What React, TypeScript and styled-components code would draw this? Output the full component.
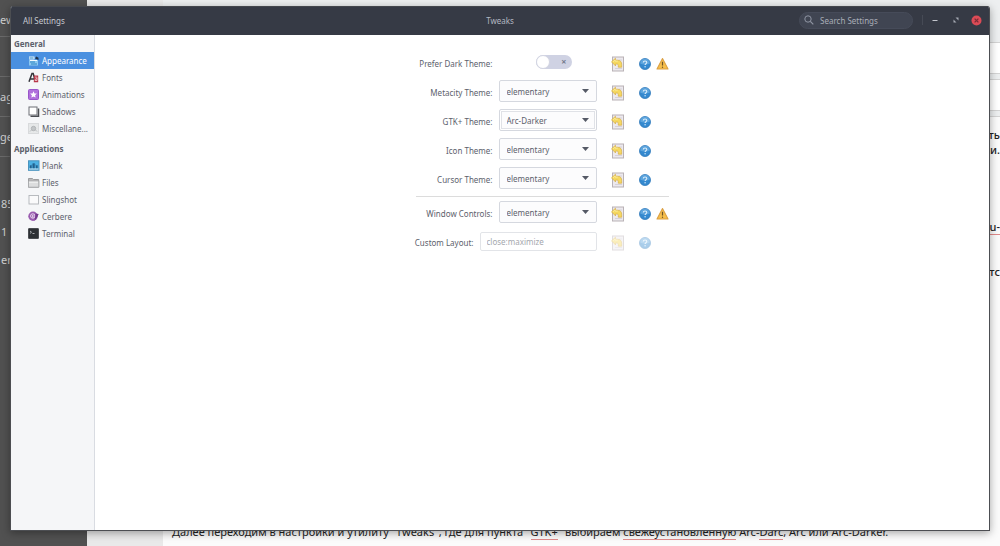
import React from "react";
import styled, { createGlobalStyle } from "styled-components";

const GlobalStyle = createGlobalStyle`
  *, *::before, *::after { box-sizing: border-box; }
  body {
    margin: 0;
    overflow: hidden;
    font-family: "Noto Sans", "Open Sans", sans-serif;
    font-size: 8px;
    color: #5c616c;
  }
  button, input, select { font: inherit; color: inherit; margin: 0; }
`;

/* ---------- page behind the window ---------- */

const Desktop = styled.div`
  position: relative;
  display: grid;
  grid-template-columns: 87px 76px 1fr;
  min-height: 100vh;
  background: #edeff0;
`;

const DarkNav = styled.aside`
  display: flex;
  flex-direction: column;
  background: #515151;
  color: #d0d0d0;
  font-size: 11px;
`;

const NavRow = styled.div<{ $plain?: boolean }>`
  display: flex;
  align-items: center;
  height: ${(p) => (p.$plain ? 28 : 39)}px;
  padding-left: ${(p) => (p.$plain ? 1 : 0)}px;
  white-space: nowrap;
`;

const NavBlock = styled.div`
  border-bottom: 1px solid #6a6a6a;
  &:first-child { height: 37px; }
`;

const NavList = styled.div`
  padding-top: 32px;
`;

const Gutter = styled.div`
  background: #e9e9e9;
`;

const Editor = styled.main`
  display: flex;
  flex-direction: column;
  padding-top: 42px;
  color: #222;
  font-size: 11px;
  line-height: 15px;
`;

const Panel = styled.div`
  height: 32px;
  margin-bottom: 5px;
  background: #fff;
  border: 1px solid #d4d4d4;
  border-width: 1px 0;
`;

const Sheet = styled.article`
  flex: 1;
  display: flex;
  flex-direction: column;
  background: #fbfbfb;
  border-top: 1px solid #d4d4d4;
  padding: 10px 0 7px 9px;
`;

const LineEnd = styled.p<{ $gap?: number }>`
  margin: ${(p) => p.$gap ?? 0}px 0 0;
  text-align: right;
  font-weight: 500;
`;

const LastLine = styled.p`
  margin: auto 0 0;
  white-space: nowrap;
`;

const Misspelt = styled.span`
  border-bottom: 1px solid #e08a8a;
`;

/* ---------- window ---------- */

const Window = styled.section`
  position: absolute;
  inset: 6px 10px 15px;
  display: flex;
  flex-direction: column;
  background: #fff;
  border: 1px solid #4c4e52;
  border-top: 0;
  border-radius: 3px 3px 0 0;
  overflow: hidden;
  box-shadow: 0 2px 8px rgba(0, 0, 0, 0.35);
`;

const TitleBar = styled.header`
  display: grid;
  grid-template-columns: 1fr auto 1fr;
  align-items: center;
  height: 29px;
  padding: 0 2px 2px;
  background: #363a45;
  border-top: 1px solid #44474d;
  color: #b4b8c1;
`;

const BackButton = styled.button`
  justify-self: start;
  padding: 0 10px;
  border: 0;
  background: none;
  color: #c6c9d0;
`;

const Title = styled.h1`
  margin: 0;
  font-size: 8px;
  font-weight: 400;
`;

const TitleEnd = styled.div`
  display: flex;
  justify-content: flex-end;
  align-items: center;
`;

const Search = styled.label`
  display: flex;
  align-items: center;
  gap: 6px;
  width: 114px;
  height: 17px;
  padding: 0 4px;
  border-radius: 9px;
  background: #404552;
  border: 1px solid #464b59;
  color: #8f95a3;
`;

const SearchInput = styled.input`
  flex: 1;
  min-width: 0;
  padding: 0;
  border: 0;
  outline: 0;
  background: none;
  &::placeholder { color: #a9adb7; opacity: 1; }
`;

const BarDivider = styled.span`
  width: 1px;
  height: 10px;
  margin: 0 1px 0 9px;
  background: #464a55;
`;

const WindowButton = styled.button`
  display: grid;
  place-items: center;
  width: 21px;
  height: 16px;
  padding: 0;
  border: 0;
  background: none;
`;

const Body = styled.div`
  flex: 1;
  display: flex;
  min-height: 0;
`;

const SideBar = styled.nav`
  display: flex;
  flex-direction: column;
  gap: 3px;
  width: 84px;
  background: #f5f6f8;
  border-right: 1px solid #d9dce2;
`;

const GroupTitle = styled.h2`
  margin: 0;
  padding-left: 3px;
  font-size: 8px;
  font-weight: 700;
  line-height: 17px;
`;

const ItemList = styled.ul`
  margin: 0;
  padding: 0;
  list-style: none;
`;

const Item = styled.a<{ $active?: boolean }>`
  display: flex;
  align-items: center;
  gap: 2px;
  height: 17px;
  padding-left: 17px;
  color: ${(p) => (p.$active ? "#fff" : "inherit")};
  background: ${(p) => (p.$active ? "#4a90e0" : "none")};
  text-decoration: none;
  white-space: nowrap;
`;

const Content = styled.div`
  flex: 1;
  display: flex;
  justify-content: center;
  padding-top: 16px;
`;

const Form = styled.form`
  display: flex;
  flex-direction: column;
  gap: 11px;
  width: 253px;
`;

const RowGroup = styled.div<{ $divided?: boolean }>`
  display: flex;
  flex-direction: column;
  gap: 7px;
  padding-top: ${(p) => (p.$divided ? 4 : 0)}px;
  margin-top: ${(p) => (p.$divided ? -4 : 0)}px;
  border-top: ${(p) => (p.$divided ? "1px solid #dcdcdc" : "0")};
`;

const Row = styled.div`
  display: flex;
  align-items: center;
  height: 22px;
`;

const Field = styled.div`
  flex: none;
  display: flex;
  justify-content: flex-end;
  align-items: center;
  gap: 6px;
  width: 181px;
`;

const Label = styled.label`
  padding-top: 3px;
  white-space: nowrap;
`;

const SelectShell = styled.span`
  position: relative;
  width: 98px;
  height: 22px;
`;

const Select = styled.select<{ $focused?: boolean }>`
  appearance: none;
  display: block;
  width: 100%;
  height: 100%;
  padding: 0 16px 0 7px;
  border: 1px solid #d5d8df;
  border-radius: 2px;
  outline: 0;
  background: #fcfcfd;
  box-shadow: ${(p) => (p.$focused ? "inset 0 0 0 1px #fff, inset 0 0 0 2px #e0e2e7" : "none")};
`;

const Caret = styled.svg`
  position: absolute;
  top: 9px;
  right: 8px;
  pointer-events: none;
`;

const SwitchSlot = styled.span`
  display: flex;
  width: 98px;
  padding-left: 37px;
`;

const Switch = styled.input`
  appearance: none;
  display: flex;
  align-items: center;
  justify-content: space-between;
  width: 36px;
  height: 14px;
  padding-right: 5px;
  border-radius: 7px;
  background: #cfd2e3;
  &::before {
    content: "";
    width: 14px;
    height: 14px;
    border: 1px solid #d3d5e2;
    border-radius: 50%;
    background: #fff;
  }
  &::after {
    content: "×";
    font-size: 9px;
    font-weight: 700;
    line-height: 12px;
    color: #757b8c;
  }
`;

const TextField = styled.input`
  width: 117px;
  height: 19px;
  padding: 0 6px;
  border: 1px solid #e2e4e8;
  border-radius: 2px;
  background: #fff;
  &:disabled { color: #a4a7ad; }
`;

const Actions = styled.div`
  display: flex;
  align-items: center;
  padding-top: 3px;
  margin-left: 14px;
`;

const IconButton = styled.button<{ $last?: boolean }>`
  display: block;
  width: 14px;
  height: 16px;
  margin-right: ${(p) => (p.$last ? 4 : 13)}px;
  padding: 0;
  border: 0;
  background: none;
  &:disabled { opacity: 0.42; }
  svg { display: block; }
`;

const ResetIcon = () => (
  <svg width="14" height="16" viewBox="0 0 14 16">
    <rect x="1.500" y="1" width="11" height="14" fill="#ece9ee" stroke="#b9b2b6" />
    <path d="M4 12.500h7M8 4h3" stroke="#d6d1d8" />
    <path
      d="M.5 5.800 4.500 2.200v2h2.200c2.700 0 4 1.700 4 4.200v2.800H7.300V9.600c0-1-.5-1.500-1.400-1.500H4.500v1.800z"
      fill="#f5d860"
      stroke="#d6ad45"
      strokeWidth=".7"
      strokeLinejoin="round"
    />
    <path d="M2 5.800 4.200 4v1.200h2.500" fill="none" stroke="#fcee9f" strokeWidth=".8" />
  </svg>
);

const HelpIcon = () => (
  <svg width="14" height="16" viewBox="0 0 14 16">
    <circle cx="7" cy="8" r="5.500" fill="#3489cf" stroke="#2f78ba" strokeWidth=".8" />
    <path d="M2.200 7.500a4.800 4.800 0 0 1 9.600 0c-2.500 1.300-7 1.300-9.600 0z" fill="#78b6e6" opacity=".6" />
    <path d="M5.300 6.600c0-2.200 3.500-2.200 3.500 0 0 1.200-1.700 1.200-1.700 2.400" fill="none" stroke="#d9ecfa" strokeWidth="1.100" />
    <circle cx="7.100" cy="10.800" r=".7" fill="#d9ecfa" />
  </svg>
);

const WarningIcon = () => (
  <svg width="13" height="14" viewBox="0 0 13 14" role="img" aria-label="Warning">
    <path d="M6.500 1.500 12 12H1z" fill="#f6bf4c" stroke="#dba045" strokeWidth="1.100" strokeLinejoin="round" />
    <path d="M6.500 4.800v3.800" stroke="#6e5429" strokeWidth="1.200" />
    <circle cx="6.500" cy="10.300" r=".7" fill="#6e5429" />
  </svg>
);

const icons: Record<string, React.ReactNode> = {
  Appearance: (
    <>
      <path d="M1 1.500h5.500v3H1z" fill="#dff1fb" />
      <path d="M1 5h9v5.500H1z" fill="#8cc8f0" />
      <path d="M1.500 3h4M2 7h5M3 9h6" stroke="#2f86c4" />
      <path d="M7 3.500 8.200 1.500l2.300 1.200V5z" fill="#22344a" />
      <path d="M2 5.500h7" stroke="#f4fbff" />
    </>
  ),
  Fonts: (
    <>
      <path d="M1 9.800 4 1.500h1.200L7.500 9.800M2.300 7H6" fill="none" stroke="#35363c" strokeWidth="1.500" />
      <path d="M6 3.500h4.200v6.700H5.800z" fill="#b73648" />
      <path d="M7 8.500c0-2 2-2 2-2v2zm0-3.300c2-.5 2 0 2 1.300" fill="none" stroke="#f3d3d7" strokeWidth=".8" />
    </>
  ),
  Animations: (
    <>
      <rect x=".5" y=".5" width="10" height="10" rx="1" fill="#b070dc" stroke="#9855c9" />
      <path d="m5.500 2.200 1 2.200 2.400.2-1.800 1.600.5 2.400-2.100-1.200-2.100 1.200.5-2.400-1.800-1.600 2.400-.2z" fill="#fff" />
    </>
  ),
  Shadows: (
    <>
      <path d="M2.500 10.200h8V2.500" fill="none" stroke="#4b4d52" strokeWidth="1.500" />
      <rect x="1" y="1" width="8" height="8" fill="#fff" stroke="#6c6e74" />
    </>
  ),
  "Miscellane...": (
    <>
      <rect x=".5" y=".5" width="10" height="10" fill="#e6e8e9" stroke="#d8dadc" />
      <circle cx="5.500" cy="5.500" r="2.200" fill="#c3c6c8" stroke="#b2b5b8" />
      <path d="M2 8.500 3.500 7M9 8.500 7.500 7" stroke="#b9bcbf" />
    </>
  ),
  Plank: (
    <>
      <rect x=".5" y=".8" width="10.500" height="9.500" fill="#4db2e4" stroke="#4a93bd" />
      <path d="M1 9h9.500" stroke="#d5e0e6" strokeWidth="1.200" />
      <path d="M2 8h1.500V5.500H2zM4.800 8h1.800V3.500H4.800zM8 8h1.500V5.500H8zM3.500 5h4.500" fill="#205c86" stroke="#2a6f9c" strokeWidth=".5" />
    </>
  ),
  Files: (
    <>
      <path d="M.5 1.500h4l1 1h5.200v7.700H.5z" fill="#b9babb" stroke="#9b9c9e" />
      <path d="M.5 4h10.300v6.200H.5z" fill="#dcddde" stroke="#a6a7a9" strokeWidth=".8" />
      <path d="M1 5.200h9" stroke="#f4f4f4" />
    </>
  ),
  Slingshot: <rect x="1" y="1.500" width="9.500" height="8.500" fill="#fafafb" stroke="#b1b4b9" strokeWidth=".9" />,
  Cerbere: (
    <>
      <circle cx="5" cy="5.200" r="4.700" fill="#9a5cb0" />
      <circle cx="4.800" cy="5" r="2.200" fill="none" stroke="#ead8f0" />
      <path d="M7.500 2.500 10.700 3 9 6.500 6.500 10 7 7z" fill="#74398d" />
      <path d="M4.800 4v2.500" stroke="#f7effa" />
    </>
  ),
  Terminal: (
    <>
      <rect x=".5" y=".5" width="10" height="10" rx=".5" fill="#2d3034" stroke="#4a4d51" />
      <path d="m2 3 1.500 1.200L2 5.400M4.500 5.500h2" fill="none" stroke="#c9cccf" strokeWidth=".8" />
    </>
  ),
};

const groups = [
  { title: "General", items: ["Appearance", "Fonts", "Animations", "Shadows", "Miscellane..."] },
  { title: "Applications", items: ["Plank", "Files", "Slingshot", "Cerbere", "Terminal"] },
];

type SettingProps = {
  id: string;
  label: string;
  warning?: boolean;
  disabled?: boolean;
  children: React.ReactNode;
};

const Setting = ({ id, label, warning, disabled, children }: SettingProps) => (
  <Row>
    <Field>
      <Label htmlFor={id}>{label}</Label>
      {children}
    </Field>
    <Actions>
      <IconButton type="button" aria-label="Reset" disabled={disabled}>
        <ResetIcon />
      </IconButton>
      <IconButton type="button" aria-label="Help" disabled={disabled} $last>
        <HelpIcon />
      </IconButton>
      {warning && <WarningIcon />}
    </Actions>
  </Row>
);

const Choice = ({ id, value, focused }: { id: string; value: string; focused?: boolean }) => (
  <SelectShell>
    <Select id={id} defaultValue={value} $focused={focused}>
      <option>elementary</option>
      <option>Arc-Darker</option>
    </Select>
    <Caret width="7" height="4" viewBox="0 0 7 4" aria-hidden="true">
      <path d="M0 0h7L3.500 4z" fill="#555a66" />
    </Caret>
  </SelectShell>
);

export default function App() {
  return (
    <>
      <GlobalStyle />
      <Desktop>
        <DarkNav>
          {["ew", "", "ag", "ge"].map((text, i) => (
            <NavBlock key={i}>
              <NavRow>{text}</NavRow>
            </NavBlock>
          ))}
          <NavList>
            {["85", "1", "en"].map((text) => (
              <NavRow key={text} $plain>
                {text}
              </NavRow>
            ))}
          </NavList>
        </DarkNav>
        <Gutter />
        <Editor>
          <Panel />
          <Panel />
          <Sheet>
            <LineEnd>ть</LineEnd>
            <LineEnd>и.</LineEnd>
            <LineEnd $gap={62}>
              <Misspelt>u-</Misspelt>
            </LineEnd>
            <LineEnd $gap={30}>тс</LineEnd>
            <LastLine>
              Далее переходим в настройки и утилиту "Tweaks", где для пункта "<Misspelt>GTK+</Misspelt>" выбираем{" "}
              <Misspelt>свежеустановленную</Misspelt> Arc-<Misspelt>Darc</Misspelt>, Arc или Arc-Darker.
            </LastLine>
          </Sheet>
        </Editor>

        <Window>
          <TitleBar>
            <BackButton type="button">All Settings</BackButton>
            <Title>Tweaks</Title>
            <TitleEnd>
              <Search>
                <svg width="10" height="10" viewBox="0 0 10 10" fill="none" stroke="currentColor" aria-hidden="true">
                  <circle cx="4" cy="4" r="3.200" />
                  <path d="m6.300 6.300 3 3" strokeWidth="1.200" />
                </svg>
                <SearchInput type="search" placeholder="Search Settings" aria-label="Search Settings" />
              </Search>
              <BarDivider />
              <WindowButton type="button" aria-label="Minimize">
                <svg width="6" height="6" viewBox="0 0 6 6">
                  <path d="M.5 3.500h5" stroke="#c3c6cd" strokeWidth="1.200" />
                </svg>
              </WindowButton>
              <WindowButton type="button" aria-label="Maximize">
                <svg width="6" height="6" viewBox="0 0 6 6" fill="#a4a8b2">
                  <path d="M2.500.5h3v3zM.5 2.500v3h3z" />
                </svg>
              </WindowButton>
              <WindowButton type="button" aria-label="Close">
                <svg width="11" height="11" viewBox="0 0 11 11">
                  <circle cx="5.500" cy="5.500" r="5" fill="#dc4b56" />
                  <path d="m3.600 3.600 3.800 3.800m0-3.800L3.600 7.400" stroke="#7c2c38" strokeWidth="1.300" />
                </svg>
              </WindowButton>
            </TitleEnd>
          </TitleBar>

          <Body>
            <SideBar aria-label="Settings">
              {groups.map((group) => (
                <section key={group.title}>
                  <GroupTitle>{group.title}</GroupTitle>
                  <ItemList>
                    {group.items.map((name) => (
                      <li key={name}>
                        <Item href="#" $active={name === "Appearance"}>
                          <svg width="12" height="11" viewBox="0 0 12 11" aria-hidden="true">
                            {icons[name]}
                          </svg>
                          {name}
                        </Item>
                      </li>
                    ))}
                  </ItemList>
                </section>
              ))}
            </SideBar>

            <Content>
              <Form>
                <RowGroup>
                  <Setting id="dark" label="Prefer Dark Theme:" warning>
                    <SwitchSlot>
                      <Switch id="dark" type="checkbox" role="switch" />
                    </SwitchSlot>
                  </Setting>
                  <Setting id="metacity" label="Metacity Theme:">
                    <Choice id="metacity" value="elementary" />
                  </Setting>
                  <Setting id="gtk" label="GTK+ Theme:">
                    <Choice id="gtk" value="Arc-Darker" focused />
                  </Setting>
                  <Setting id="icon" label="Icon Theme:">
                    <Choice id="icon" value="elementary" />
                  </Setting>
                  <Setting id="cursor" label="Cursor Theme:">
                    <Choice id="cursor" value="elementary" />
                  </Setting>
                </RowGroup>
                <RowGroup $divided>
                  <Setting id="controls" label="Window Controls:" warning>
                    <Choice id="controls" value="elementary" />
                  </Setting>
                  <Setting id="layout" label="Custom Layout:" disabled>
                    <TextField id="layout" type="text" defaultValue="close:maximize" disabled />
                  </Setting>
                </RowGroup>
              </Form>
            </Content>
          </Body>
        </Window>
      </Desktop>
    </>
  );
}
